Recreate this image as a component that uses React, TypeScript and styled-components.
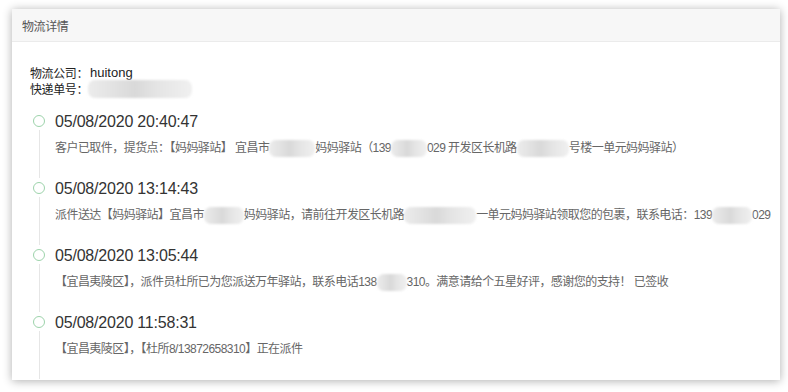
import React from "react";
import styled, { createGlobalStyle } from "styled-components";

const Global = createGlobalStyle`
  html, body { margin: 0; padding: 0; background: #ffffff; }
  body { font-family: "Liberation Sans", "Noto Sans CJK SC", sans-serif; }
  * { box-sizing: border-box; }
`;

const Page = styled.div`
  width: 788px;
  height: 392px;
  padding: 9px 8px 12px 12px;
  overflow: hidden;
`;

const Card = styled.section`
  width: 768px;
  height: 371px;
  background: #fff;
  box-shadow: 0 1px 9px rgba(0, 0, 0, 0.32);
  overflow: hidden;
  display: flex;
  flex-direction: column;
`;

const Header = styled.div`
  height: 33px;
  flex: none;
  background: #f7f7f7;
  border-bottom: 1px solid #ebebeb;
  padding-left: 10px;
  display: flex;
  align-items: center;
  font-size: 12px;
  letter-spacing: -0.4px;
  color: #555;
  font-family: "Noto Sans CJK SC", sans-serif;
`;

const Body = styled.div`
  padding: 23px 18px 0 18px;
  flex: 1;
  display: flex;
  flex-direction: column;
`;

const Info = styled.div`
  font-size: 12px;
  line-height: 16px;
  color: #222;
  letter-spacing: -0.4px;
  font-family: "Noto Sans CJK SC", sans-serif;
`;

const InfoRow = styled.div`
  display: flex;
  align-items: center;
  height: 16px;
`;

const InfoValue = styled.span`
  font-family: "Liberation Sans", "Noto Sans CJK SC", sans-serif;
  font-size: 13px;
  letter-spacing: 0;
  margin-left: 2px;
`;

const Redact = styled.span<{ $w: number; $h?: number }>`
  display: inline-block;
  width: ${(p) => p.$w}px;
  height: ${(p) => p.$h ?? 17}px;
  vertical-align: middle;
  border-radius: 7px;
  background: linear-gradient(
    90deg,
    #ececec 0%,
    #e2e2e2 25%,
    #d9d9d9 45%,
    #e4e4e4 65%,
    #ebebeb 85%,
    #f0f0f0 100%
  );
  filter: blur(1px);
`;

const Timeline = styled.div`
  margin-top: 14px;
  margin-left: 3px;
  display: flex;
  flex-direction: column;
`;

const Item = styled.div`
  display: flex;
  height: 67px;
`;

const Rail = styled.div`
  width: 12px;
  flex: none;
  display: flex;
  flex-direction: column;
  align-items: center;
`;

const Dot = styled.div`
  width: 12px;
  height: 12px;
  margin-top: 4px;
  border-radius: 50%;
  border: 1.5px solid #9dd3ab;
  background: #fff;
  flex: none;
`;

const Line = styled.div`
  width: 1px;
  flex: 1;
  margin-top: 3px;
  background: #e6e6e6;
`;

const Content = styled.div`
  margin-left: 10px;
  display: flex;
  flex-direction: column;
`;

const Time = styled.div`
  font-size: 16px;
  line-height: 22px;
  letter-spacing: -0.2px;
  color: #333;
  font-family: "Liberation Sans", sans-serif;
`;

const Desc = styled.div`
  margin-top: 6px;
  font-size: 12px;
  line-height: 18px;
  letter-spacing: -0.55px;
  color: #666;
  white-space: nowrap;
  font-family: "Liberation Sans", "Noto Sans CJK SC", sans-serif;
`;

type Part = string | { r: number };

const events: { time: string; parts: Part[] }[] = [
  {
    time: "05/08/2020 20:40:47",
    parts: [
      "客户已取件，提货点：【妈妈驿站】 宜昌市",
      { r: 46 },
      "妈妈驿站（139",
      { r: 36 },
      "029 开发区长机路",
      { r: 52 },
      "号楼一单元妈妈驿站）",
    ],
  },
  {
    time: "05/08/2020 13:14:43",
    parts: [
      "派件送达【妈妈驿站】宜昌市",
      { r: 40 },
      "妈妈驿站，请前往开发区长机路",
      { r: 72 },
      "一单元妈妈驿站领取您的包裹，联系电话：139",
      { r: 40 },
      "029",
    ],
  },
  {
    time: "05/08/2020 13:05:44",
    parts: [
      "【宜昌夷陵区】，派件员杜所已为您派送万年驿站，联系电话138",
      { r: 30 },
      "310。满意请给个五星好评，感谢您的支持！ 已签收",
    ],
  },
  {
    time: "05/08/2020 11:58:31",
    parts: ["【宜昌夷陵区】，【杜所8/13872658310】正在派件"],
  },
];

export default function App() {
  return (
    <>
      <Global />
      <Page>
        <Card>
          <Header>物流详情</Header>
          <Body>
            <Info>
              <InfoRow>
                物流公司：<InfoValue>huitong</InfoValue>
              </InfoRow>
              <InfoRow>
                快递单号：<Redact $w={104} $h={18} />
              </InfoRow>
            </Info>
            <Timeline>
              {events.map((e) => (
                <Item key={e.time}>
                  <Rail>
                    <Dot />
                    <Line />
                  </Rail>
                  <Content>
                    <Time>{e.time}</Time>
                    <Desc>
                      {e.parts.map((p, i) =>
                        typeof p === "string" ? (
                          <span key={i}>{p}</span>
                        ) : (
                          <Redact key={i} $w={p.r} />
                        )
                      )}
                    </Desc>
                  </Content>
                </Item>
              ))}
            </Timeline>
          </Body>
        </Card>
      </Page>
    </>
  );
}
